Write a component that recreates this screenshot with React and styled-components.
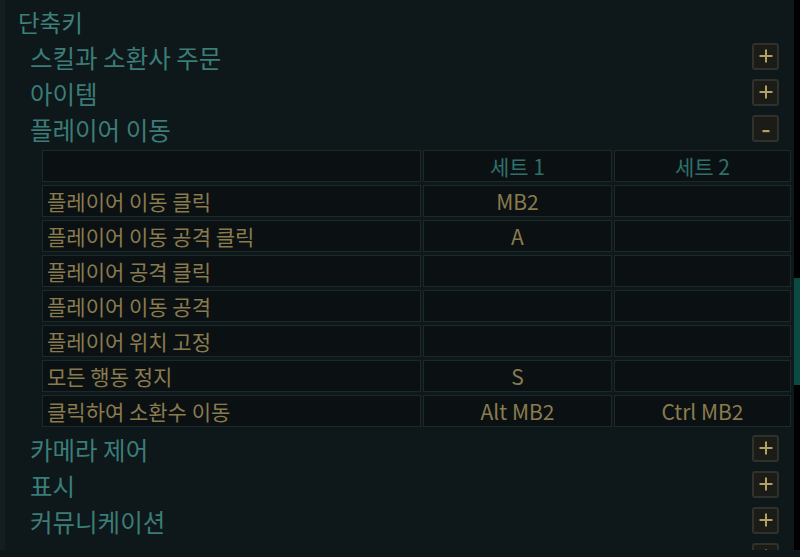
import React from "react";
import styled, { createGlobalStyle } from "styled-components";

const GlobalStyle = createGlobalStyle`
  html, body {
    margin: 0;
    padding: 0;
    background: #0e1719;
  }
  body {
    font-family: "Noto Sans CJK KR", "Noto Sans", sans-serif;
  }
`;

const sections = [
  { title: "스킬과 소환사 주문", open: false },
  { title: "아이템", open: false },
  { title: "플레이어 이동", open: true },
  { title: "카메라 제어", open: false },
  { title: "표시", open: false },
  { title: "커뮤니케이션", open: false },
  { title: "", open: false },
];

const moveRows = [
  ["플레이어 이동 클릭", "MB2", ""],
  ["플레이어 이동 공격 클릭", "A", ""],
  ["플레이어 공격 클릭", "", ""],
  ["플레이어 이동 공격", "", ""],
  ["플레이어 위치 고정", "", ""],
  ["모든 행동 정지", "S", ""],
  ["클릭하여 소환수 이동", "Alt MB2", "Ctrl MB2"],
];

function ToggleIcon({ open }) {
  return (
    <svg width="14" height="14" viewBox="0 0 14 14">
      {open ? (
        <rect x="3.5" y="9" width="7" height="2.2" fill="#b4a062" />
      ) : (
        <>
          <rect x="6" y="0.5" width="2" height="13" fill="#b4a062" />
          <rect x="0.5" y="6" width="13" height="2" fill="#b4a062" />
        </>
      )}
    </svg>
  );
}

export default function App() {
  return (
    <>
      <GlobalStyle />
      <Page>
        <Panel>
          <LeftEdge />
          <Content>
            <Title>단축키</Title>
            {sections.map((s, i) => (
              <React.Fragment key={i}>
                <SectionRow>
                  <SectionTitle>{s.title}</SectionTitle>
                  <ToggleButton>
                    <ToggleIcon open={s.open} />
                  </ToggleButton>
                </SectionRow>
                {s.open && (
                  <Table>
                    <colgroup>
                      <col style={{ width: 379 }} />
                      <col style={{ width: 189 }} />
                      <col />
                    </colgroup>
                    <thead>
                      <tr>
                        <Cell />
                        <HeadCell>세트 1</HeadCell>
                        <HeadCell>세트 2</HeadCell>
                      </tr>
                    </thead>
                    <tbody>
                      {moveRows.map((r, j) => (
                        <tr key={j}>
                          <Cell>{r[0]}</Cell>
                          <Cell $center>{r[1]}</Cell>
                          <Cell $center>{r[2]}</Cell>
                        </tr>
                      ))}
                    </tbody>
                  </Table>
                )}
              </React.Fragment>
            ))}
          </Content>
          <ScrollTrack>
            <ScrollThumb />
          </ScrollTrack>
        </Panel>
        <Footer />
      </Page>
    </>
  );
}

const Page = styled.div`
  width: 800px;
  height: 557px;
  display: flex;
  flex-direction: column;
  background: #0e1719;
`;

const Panel = styled.div`
  height: 550px;
  display: flex;
  flex-direction: row;
  overflow: hidden;
`;

const LeftEdge = styled.div`
  width: 5px;
  flex: none;
  background: #121e1f;
`;

const Content = styled.div`
  flex: 1;
  min-width: 0;
  overflow: hidden;
`;

const Title = styled.div`
  height: 38px;
  padding-left: 13px;
  padding-top: 6px;
  box-sizing: border-box;
  line-height: 32px;
  font-size: 23.5px;
  color: #3d807b;
`;

const SectionRow = styled.div`
  height: 36px;
  display: flex;
  align-items: center;
  justify-content: space-between;
  padding-left: 25px;
  padding-right: 15px;
`;

const SectionTitle = styled.div`
  font-size: 24.5px;
  line-height: 32px;
  color: #3b7d78;
  padding-top: 4px;
`;

const ToggleButton = styled.div`
  width: 27px;
  height: 27px;
  box-sizing: border-box;
  border: 2px solid #31312c;
  border-radius: 3px;
  background: #1b1b18;
  display: flex;
  align-items: center;
  justify-content: center;
`;

const Table = styled.table`
  margin: 1px 0 0 35px;
  width: 753px;
  table-layout: fixed;
  border-collapse: separate;
  border-spacing: 2px 3px;
`;

const Cell = styled.td`
  height: 32px;
  box-sizing: border-box;
  padding: 0 4px;
  border: 1px solid #1c2929;
  background: #0b1112;
  color: #8a7b4f;
  font-size: 21px;
  line-height: 28px;
  white-space: nowrap;
  text-align: ${(p) => (p.$center ? "center" : "left")};
`;

const HeadCell = styled(Cell).attrs({ as: "th" })`
  font-weight: normal;
  text-align: center;
  color: #2f706b;
`;

const ScrollTrack = styled.div`
  width: 6px;
  flex: none;
  background: #000;
`;

const ScrollThumb = styled.div`
  margin-top: 278px;
  height: 107px;
  background: #0b4a42;
`;

const Footer = styled.div`
  height: 7px;
  background: #0e1719;
`;
